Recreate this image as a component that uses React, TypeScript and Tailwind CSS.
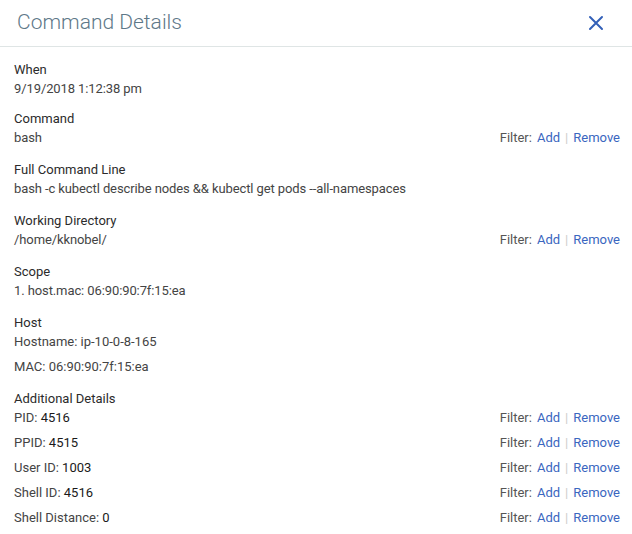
import React from "react";

const FilterLinks = () => (
  <div className="flex items-center text-[13px] text-[#555]">
    <span>Filter:</span>
    <a className="ml-[5px] text-[#3a66c0]">Add</a>
    <span className="mx-[5px] text-[#ccc]">|</span>
    <a className="text-[#3a66c0]">Remove</a>
  </div>
);

const Section = ({
  label,
  value,
  filter,
  className = "mb-[13px]",
}: {
  label: string;
  value: string;
  filter?: boolean;
  className?: string;
}) => (
  <div className={className}>
    <div className="text-[13px] leading-[19px] text-[#2b2b2b]">{label}</div>
    <div className="flex items-center justify-between leading-[19px]">
      <span className="text-[13px] text-[#444] tracking-[-0.1px]">{value}</span>
      {filter && <FilterLinks />}
    </div>
  </div>
);

const details = [
  { k: "PID", v: "4516" },
  { k: "PPID", v: "4515" },
  { k: "User ID", v: "1003" },
  { k: "Shell ID", v: "4516" },
  { k: "Shell Distance", v: "0" },
];

export default function App() {
  return (
    <div className="w-[632px] h-[534px] bg-white font-['Roboto',sans-serif] overflow-hidden">
      {/* Header */}
      <div className="h-[47px] flex items-center justify-between pl-[17px] pr-[28px] border-b border-[#dfe5e5]">
        <h1 className="text-[21px] font-light text-[#5e7888]">Command Details</h1>
        <svg width="16" height="16" viewBox="0 0 16 16" className="text-[#3360b8]">
          <path d="M2 2 L14 14 M14 2 L2 14" stroke="currentColor" strokeWidth="2" strokeLinecap="round" />
        </svg>
      </div>

      {/* Body */}
      <div className="pl-[14px] pr-[12px] pt-[13px]">
        <Section label="When" value="9/19/2018 1:12:38 pm" className="mb-[11px]" />
        <Section label="Command" value="bash" filter />
        <Section label="Full Command Line" value="bash -c kubectl describe nodes && kubectl get pods --all-namespaces" />
        <Section label="Working Directory" value="/home/kknobel/" filter />
        <Section label="Scope" value="1. host.mac: 06:90:90:7f:15:ea" />

        <div className="mb-[13px]">
          <div className="text-[13px] leading-[19px] text-[#2b2b2b]">Host</div>
          <div className="text-[13px] leading-[19px] text-[#444]">Hostname: ip-10-0-8-165</div>
          <div className="text-[13px] leading-[19px] text-[#444] mt-[6px]">MAC: 06:90:90:7f:15:ea</div>
        </div>

        <div>
          <div className="text-[13px] leading-[19px] text-[#2b2b2b]">Additional Details</div>
          <div className="flex flex-col gap-[6px]">
            {details.map((d) => (
              <div key={d.k} className="flex items-center justify-between leading-[19px]">
                <span className="text-[13px] text-[#444]">
                  {d.k}: <span className="text-[#1a1a1a]">{d.v}</span>
                </span>
                <FilterLinks />
              </div>
            ))}
          </div>
        </div>
      </div>
    </div>
  );
}
